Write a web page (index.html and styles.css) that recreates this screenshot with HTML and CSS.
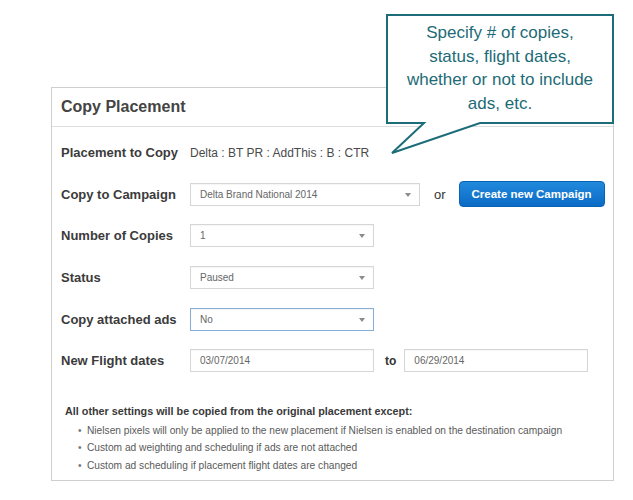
FILE: index.html
```html
<!DOCTYPE html>
<html>
<head>
<meta charset="utf-8">
<link rel="stylesheet" href="styles.css">
</head>
<body>
<div class="page">
  <div class="panel">
    <div class="panel-head">Copy Placement</div>
    <div class="panel-body">
      <div class="row">
        <div class="label">Placement to Copy</div>
        <div class="value">Delta : BT PR : AddThis : B : CTR</div>
      </div>
      <div class="row">
        <div class="label">Copy to Campaign</div>
        <div class="field select wide"><span>Delta Brand National 2014</span><i class="caret"></i></div>
        <div class="or">or</div>
        <button class="btn">Create new Campaign</button>
      </div>
      <div class="row">
        <div class="label">Number of Copies</div>
        <div class="field select"><span>1</span><i class="caret"></i></div>
      </div>
      <div class="row">
        <div class="label">Status</div>
        <div class="field select"><span>Paused</span><i class="caret"></i></div>
      </div>
      <div class="row">
        <div class="label">Copy attached ads</div>
        <div class="field select focus"><span>No</span><i class="caret"></i></div>
      </div>
      <div class="row">
        <div class="label">New Flight dates</div>
        <div class="field"><span>03/07/2014</span></div>
        <div class="to">to</div>
        <div class="field"><span>06/29/2014</span></div>
      </div>
      <div class="note">
        <div class="note-title">All other settings will be copied from the original placement except:</div>
        <ul class="note-list">
          <li>Nielsen pixels will only be applied to the new placement if Nielsen is enabled on the destination campaign</li>
          <li>Custom ad weighting and scheduling if ads are not attached</li>
          <li>Custom ad scheduling if placement flight dates are changed</li>
        </ul>
      </div>
    </div>
  </div>

  <div class="callout">
    <svg class="callout-shape" width="228" height="142" viewBox="0 0 228 142">
      <path d="M1 1 H227 V109 H94 L6 139 L38 109 H1 Z" fill="#fff" stroke="#1c6d79" stroke-width="2" stroke-linejoin="miter"/>
    </svg>
    <div class="callout-text">Specify # of copies,<br>status, flight dates,<br>whether or not to include<br>ads, etc.</div>
  </div>
</div>
</body>
</html>
```

FILE: styles.css
```css
html, body {
  margin: 0;
  padding: 0;
  background: #fff;
}
body {
  font-family: "Liberation Sans", Arial, sans-serif;
}
.page {
  position: relative;
  width: 633px;
  height: 500px;
  overflow: hidden;
  padding-top: 87px;
  box-sizing: border-box;
}
.panel {
  margin-left: 51px;
  width: 563px;
  box-sizing: border-box;
  border: 1px solid #cfcfcf;
  background: #fff;
}
.panel-head {
  height: 38px;
  line-height: 38px;
  padding-left: 9px;
  border-bottom: 1px solid #dedede;
  font-size: 16px;
  font-weight: bold;
  color: #444;
}
.panel-body {
  padding: 5px 0 6px 0;
}
.row {
  display: flex;
  align-items: center;
  height: 41.6px;
  padding-left: 9px;
}
.label {
  width: 129px;
  flex: none;
  font-size: 13px;
  font-weight: bold;
  color: #3b3b3b;
}
.value {
  font-size: 12px;
  color: #4a4a4a;
}
.field {
  position: relative;
  box-sizing: border-box;
  width: 184px;
  height: 23px;
  border: 1px solid #d6d6d6;
  background: #fff;
  display: flex;
  align-items: center;
  padding-left: 9px;
  font-size: 10px;
  color: #666;
  box-shadow: inset 0 1px 1px rgba(0,0,0,0.04);
}
.field.wide {
  width: 230px;
}
.field.focus {
  border-color: #86acd8;
}
.caret {
  position: absolute;
  right: 8px;
  top: 9px;
  width: 0;
  height: 0;
  border-left: 3px solid transparent;
  border-right: 3px solid transparent;
  border-top: 4px solid #8a8a8a;
}
.or {
  margin-left: 14px;
  font-size: 13px;
  color: #333;
}
.btn {
  margin-left: 13px;
  width: 146px;
  height: 26px;
  border: 1px solid #0a62b3;
  border-radius: 4px;
  background: linear-gradient(#2189dc, #0b6bc6);
  color: #fff;
  font-family: "Liberation Sans", Arial, sans-serif;
  font-size: 11.5px;
  font-weight: bold;
  padding: 0;
}
.to {
  margin-left: 11px;
  margin-right: 8px;
  font-size: 12px;
  font-weight: bold;
  color: #333;
}
.note {
  margin-top: 21px;
  padding-left: 13px;
}
.note-title {
  font-size: 10.8px;
  font-weight: bold;
  color: #3a3a3a;
  line-height: 17px;
  margin-bottom: 2px;
}
.note-list {
  list-style: none;
  margin: 0;
  padding: 0 0 0 13px;
}
.note-list li {
  font-size: 10.2px;
  line-height: 17.5px;
  color: #5a5a5a;
}
.note-list li::before {
  content: "\2022";
  display: inline-block;
  width: 9px;
  color: #777;
}
.callout {
  position: absolute;
  left: 386px;
  top: 14px;
  width: 228px;
  height: 142px;
}
.callout-shape {
  position: absolute;
  left: 0;
  top: 0;
}
.callout-text {
  position: relative;
  padding-top: 7px;
  width: 228px;
  text-align: center;
  font-size: 17px;
  line-height: 23.7px;
  color: #1d6b76;
}
```
